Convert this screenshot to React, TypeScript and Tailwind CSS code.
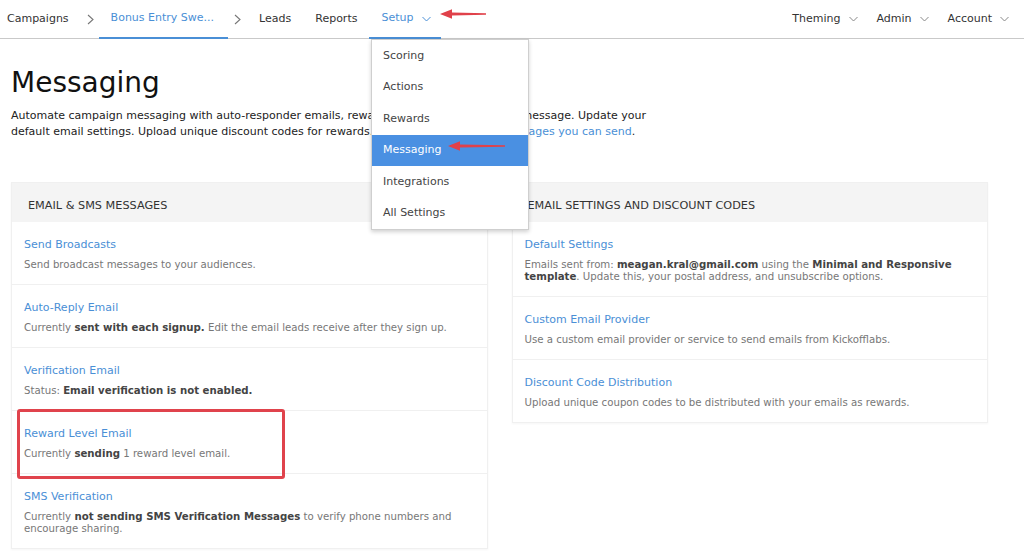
import { ReactNode } from "react";

const Chevron = ({ className = "" }: { className?: string }) => (
  <svg width="9" height="6" viewBox="0 0 9 6" className={className}>
    <path d="M0.5 1 L4.5 5 L8.5 1" fill="none" stroke="currentColor" strokeWidth="1" />
  </svg>
);

const Crumb = () => (
  <svg width="7" height="11" viewBox="0 0 7 11" className="text-[#777]">
    <path d="M1 1 L6 5.5 L1 10" fill="none" stroke="currentColor" strokeWidth="1.1" />
  </svg>
);

const Arrow = ({ width }: { width: number }) => (
  <svg width={width} height="12" viewBox={`0 0 ${width} 12`}>
    <path d={`M${width} 5.2 L12 4.6 L12 1.2 L0 6 L12 10.8 L12 7.4 L${width} 6.8 Z`} fill="#e0414a" />
  </svg>
);

interface Row {
  title: string;
  desc: ReactNode;
}

const leftRows: Row[] = [
  { title: "Send Broadcasts", desc: "Send broadcast messages to your audiences." },
  {
    title: "Auto-Reply Email",
    desc: (
      <>
        Currently <b className="text-[#444]">sent with each signup.</b> Edit the email leads receive after they sign up.
      </>
    ),
  },
  {
    title: "Verification Email",
    desc: (
      <>
        Status: <b className="text-[#444]">Email verification is not enabled.</b>
      </>
    ),
  },
  {
    title: "Reward Level Email",
    desc: (
      <>
        Currently <b className="text-[#444]">sending</b> 1 reward level email.
      </>
    ),
  },
  {
    title: "SMS Verification",
    desc: (
      <>
        Currently <b className="text-[#444]">not sending SMS Verification Messages</b> to verify phone numbers and encourage sharing.
      </>
    ),
  },
];

const rightRows: Row[] = [
  {
    title: "Default Settings",
    desc: (
      <>
        Emails sent from: <b className="text-[#444]">meagan.kral@gmail.com</b> using the{" "}
        <b className="text-[#444]">Minimal and Responsive template</b>. Update this, your postal address, and unsubscribe options.
      </>
    ),
  },
  { title: "Custom Email Provider", desc: "Use a custom email provider or service to send emails from Kickofflabs." },
  { title: "Discount Code Distribution", desc: "Upload unique coupon codes to be distributed with your emails as rewards." },
];

const Card = ({ heading, rows, headPad }: { heading: string; rows: Row[]; headPad: string }) => (
  <div className="border border-[#f0f0f0] bg-white shadow-[0_1px_2px_rgba(0,0,0,0.04)]">
    <div className={`h-[39px] pt-[7px] bg-[#f4f4f4] flex items-center text-[11.25px] text-[#333] ${headPad}`}>{heading}</div>
    {rows.map((row, i) => (
      <div
        key={row.title}
        className={`pl-[12px] pr-6 pt-[16px] pb-[13px] ${i < rows.length - 1 ? "border-b border-[#f0f0f0]" : ""}`}
      >
        <div className="text-[11px] leading-[14px] text-[#4a8fd6]">{row.title}</div>
        <div className="mt-[7px] text-[10.2px] leading-[12px] text-[#777]">{row.desc}</div>
      </div>
    ))}
  </div>
);

const menu = ["Scoring", "Actions", "Rewards", "Messaging", "Integrations", "All Settings"];

export default function App() {
  return (
    <div className="relative w-[1024px] h-[554px] overflow-hidden bg-white font-['DejaVu_Sans',Verdana,sans-serif]">
      {/* top nav */}
      <div className="h-[39px] border-b border-[#c9c9c9] flex items-stretch justify-between text-[11px] text-[#333]">
        <div className="flex items-stretch">
          <div className="flex items-center pl-[7px] pr-[18px]">Campaigns</div>
          <div className="flex items-center">
            <Crumb />
          </div>
          <div className="flex items-center pl-3 pr-[14px] ml-[5px] text-[#4a8fd6] border-b-2 border-[#4a8fd6] -mb-px">
            Bonus Entry Swe...
          </div>
          <div className="flex items-center ml-[6px] mr-[6px]">
            <Crumb />
          </div>
          <div className="flex items-center px-3">Leads</div>
          <div className="flex items-center px-3">Reports</div>
          <div className="flex items-center pl-3 pr-[10px] gap-[9px] text-[#4a8fd6] border-b-2 border-[#4a8fd6] -mb-px">
            Setup
            <Chevron />
          </div>
        </div>
        <div className="flex items-stretch pr-[15px]">
          {["Theming", "Admin", "Account"].map((t) => (
            <div key={t} className="flex items-center gap-[8px] pl-[19px]">
              {t}
              <Chevron className="text-[#888]" />
            </div>
          ))}
        </div>
      </div>

      {/* page */}
      <div className="px-[11px]">
        <h1 className="mt-[26px] text-[28px] leading-[36px] text-[#111]">Messaging</h1>
        <p className="mt-[7px] text-[11px] leading-[16px] text-[#222]">
          Automate campaign messaging with auto-responder emails, reward emails, and verification message. Update your
          <br />
          default email settings. Upload unique discount codes for rewards.{" "}
          <span className="text-[#4a8fd6]">Learn more about the messages you can send</span>.
        </p>

        <div className="mt-[42px] grid grid-cols-2 gap-6 w-[977px]">
          <Card heading="EMAIL & SMS MESSAGES" rows={leftRows} headPad="pl-[16px]" />
          <div className="self-start">
            <Card heading="EMAIL SETTINGS AND DISCOUNT CODES" rows={rightRows} headPad="pl-[15px]" />
          </div>
        </div>
      </div>

      {/* setup dropdown */}
      <div className="absolute left-[371px] top-[39px] w-[158px] bg-white border border-[#cfcfcf] shadow-[0_2px_4px_rgba(0,0,0,0.18)] text-[11px] text-[#444]">
        {menu.map((m) => (
          <div
            key={m}
            className={`h-[31.5px] flex items-center pl-[11px] ${m === "Messaging" ? "bg-[#4a90e2] text-white" : ""}`}
          >
            {m}
          </div>
        ))}
      </div>

      {/* annotations */}
      <div className="absolute left-[440px] top-[8px]">
        <Arrow width={46} />
      </div>
      <div className="absolute left-[448px] top-[140px]">
        <Arrow width={57} />
      </div>
      <div className="absolute left-[17px] top-[409px] w-[268px] h-[70px] border-[3px] border-[#e0434c] rounded-[3px]" />
    </div>
  );
}
